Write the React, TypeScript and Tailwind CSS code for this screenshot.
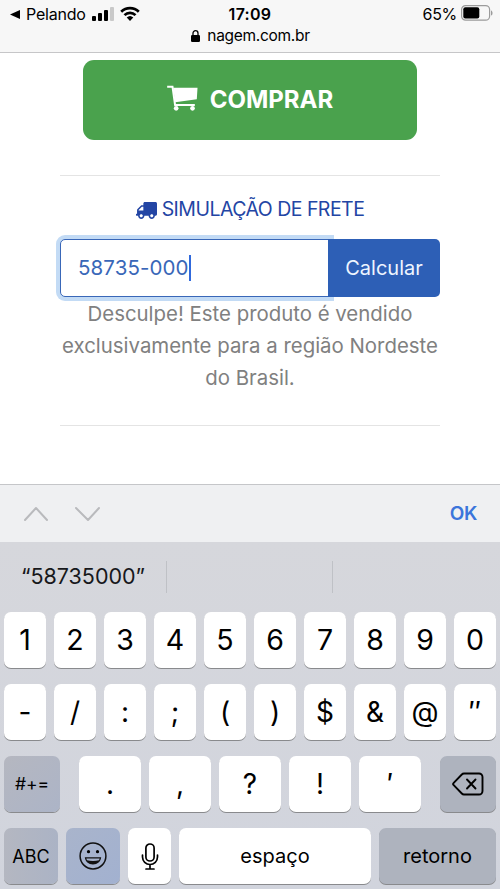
import { FaTruck } from "react-icons/fa";
import clsx from "clsx";
import type { ReactNode } from "react";

const numberRow = ["1", "2", "3", "4", "5", "6", "7", "8", "9", "0"];
const symbolRow = ["-", "/", ":", ";", "(", ")", "$", "&", "@", "″"];
const punctuationRow = [".", ",", "?", "!", "′"];

function Key({
  children,
  className,
}: {
  children: ReactNode;
  className?: string;
}) {
  return (
    <button
      className={clsx(
        "flex h-14 items-center justify-center rounded-[7px] text-black shadow-[0_1px_0_#898a8d]",
        className,
      )}
    >
      {children}
    </button>
  );
}

function StatusBar() {
  return (
    <header className="h-[53px] border-b border-[#c6c6c8] bg-[#f7f7f7] text-black">
      <div className="grid h-7 grid-cols-3 items-center">
        <div className="flex items-center pl-[10px]">
          <svg viewBox="0 0 10 9" className="h-[9px] w-[10px]">
            <path d="M0 4.5 10 0v9z" />
          </svg>
          <span className="ml-[6px] text-[16px] tracking-[-0.2px]">
            Pelando
          </span>
          <svg viewBox="0 0 22 14" className="ml-[6px] h-[14px] w-[22px]">
            <rect x="0" y="9" width="4" height="5" rx="1" />
            <rect x="6" y="6" width="4" height="8" rx="1" />
            <rect x="12" y="3" width="4" height="11" rx="1" />
            <rect x="18" y="0" width="4" height="14" rx="1" fill="#c9c9c9" />
          </svg>
          <svg viewBox="0 0 20 15" className="ml-[6px] -mt-[2px] h-[15px] w-5">
            <g fill="none" stroke="#000" strokeWidth="2.7">
              <path d="M1.2 5.7a12.6 12.6 0 0 1 17.6 0" />
              <path d="M4.5 9.1a7.9 7.9 0 0 1 11 0" />
            </g>
            <path d="M10 15 6.7 11.6a4.9 4.9 0 0 1 6.6 0z" />
          </svg>
        </div>
        <span className="text-center text-[16px] font-semibold tracking-[0.3px]">
          17:09
        </span>
        <div className="flex items-center justify-end pr-[7px]">
          <span className="text-[16px] tracking-[-0.3px]">65%</span>
          <svg viewBox="0 0 32 16" className="ml-1 -mt-[2px] h-4 w-8">
            <rect
              x="0.6"
              y="0.6"
              width="28"
              height="14.6"
              rx="4"
              fill="none"
              stroke="#9b9b9b"
              strokeWidth="1.2"
            />
            <rect x="2.3" y="2.3" width="16" height="11.2" rx="2" />
            <path d="M30 5.4c2 .6 2 4.6 0 5.2z" fill="#9b9b9b" />
          </svg>
        </div>
      </div>
      <div className="flex h-4 items-center justify-center gap-[7px] pl-px">
        <svg viewBox="0 0 9 12" className="h-3 w-[9px]">
          <rect x="0" y="5" width="9" height="7" rx="1.2" />
          <path
            d="M2 6V3.2a2.500 2.500 0 0 1 5 0V6"
            fill="none"
            stroke="#000"
            strokeWidth="1.3"
          />
        </svg>
        <span className="text-[15.5px] leading-4 tracking-[-0.3px]">
          nagem.com.br
        </span>
      </div>
    </header>
  );
}

function CartIcon() {
  return (
    <svg viewBox="0 0 92 78" className="-mt-1 h-[26px] w-[31px]">
      <g fill="none" stroke="#fff" strokeWidth="6">
        <path d="M0 5h16l8 57" />
        <path d="M22 60h61" />
      </g>
      <path d="M18 8h73l-2 35-65 9z" fill="#fff" />
      <circle cx="27" cy="70" r="7" fill="#fff" />
      <circle cx="76" cy="70" r="7" fill="#fff" />
    </svg>
  );
}

function ShippingForm() {
  return (
    <section className="mx-[60px] mt-[35px] h-[251px] border-y border-[#e4e4e4]">
      <h2 className="mt-[22px] flex h-6 items-center justify-center gap-[5px] text-[#2345a4]">
        <FaTruck className="h-[17px] w-[21px] -scale-x-100" />
        <span className="text-[19.5px] tracking-[-0.52px] whitespace-nowrap">
          SIMULAÇÃO DE FRETE
        </span>
      </h2>
      <div className="mt-[17px] flex h-[58px]">
        <div className="flex w-[270px] items-center rounded-l-[5px] border border-[#3967b8] bg-white pl-[17px] text-[20.5px] text-[#3967b8] shadow-[0_0_0_4px_#c3dbf5]">
          <span className="tracking-[0.1px]">58735-000</span>
          <span className="h-[26px] w-[2px] bg-[#3069dc]" />
        </div>
        <button className="relative w-[112px] -ml-[2px] rounded-r-[5px] bg-[#2d5fb6] text-[20px] text-[#eef5ff]">
          Calcular
        </button>
      </div>
      <p className="mt-px text-center text-[20.4px] leading-8 whitespace-nowrap text-[#808080]">
        Desculpe! Este produto é vendido
        <br />
        exclusivamente para a região Nordeste
        <br />
        do Brasil.
      </p>
    </section>
  );
}

function Keyboard() {
  return (
    <div className="h-[347px] bg-linear-to-b from-[#d6d7dc] to-[#d1d4dd]">
      <div className="flex h-[70px] items-center">
        <span className="flex h-8 w-[167px] items-center justify-center border-r border-[#bfc1c6] pb-[2px] text-[21.5px] text-[#17181b]">
          “58735000”
        </span>
        <span className="h-8 w-[166px] border-r border-[#bfc1c6]" />
      </div>
      <div className="flex flex-col gap-4 px-1">
        <div className="grid grid-cols-10 gap-2">
          {numberRow.map((key) => (
            <Key key={key} className="bg-white text-[28.5px]">
              {key}
            </Key>
          ))}
        </div>
        <div className="grid grid-cols-10 gap-2">
          {symbolRow.map((key) => (
            <Key key={key} className="bg-white text-[28px]">
              {key}
            </Key>
          ))}
        </div>
        <div className="flex justify-between">
          <Key className="w-14 bg-linear-to-br from-[#b5b7c0] to-[#acb4c7] text-[17.5px]">
            #+=
          </Key>
          <div className="flex gap-2">
            {punctuationRow.map((key) => (
              <Key key={key} className="w-[62px] bg-white text-[28px]">
                {key}
              </Key>
            ))}
          </div>
          <Key className="w-14 bg-[#aeb3be]">
            <svg
              viewBox="0 0 32 24"
              className="h-6 w-8"
              fill="none"
              stroke="#000"
              strokeWidth="1.9"
              strokeLinecap="round"
              strokeLinejoin="round"
            >
              <path d="M12 1.5h15a3.5 3.5 0 0 1 3.5 3.5v14a3.5 3.5 0 0 1-3.5 3.5H12a3 3 0 0 1-2.2-1L1.7 13.2a1.7 1.7 0 0 1 0-2.4l8.1-8.3a3 3 0 0 1 2.2-1z" />
              <path d="m15 7.5 8.5 9M23.5 7.5l-8.5 9" />
            </svg>
          </Key>
        </div>
        <div className="flex gap-2">
          <Key className="w-[54px] bg-linear-to-r from-[#b4b7c1] to-[#abb3c5] text-[18px]">
            ABC
          </Key>
          <Key className="w-[54px] bg-linear-to-br from-[#a9b4cb] to-[#a2b1d0]">
            <svg viewBox="0 0 28 28" className="h-7 w-7">
              <circle
                cx="14"
                cy="14"
                r="12.9"
                fill="none"
                stroke="#111"
                strokeWidth="1.5"
              />
              <circle cx="9.5" cy="9.7" r="1.6" />
              <circle cx="18.5" cy="9.7" r="1.6" />
              <path
                d="M5.8 15.3h16.400c-.5 4.200-3.700 7.200-8.200 7.200s-7.700-3-8.200-7.200z"
                fill="#111"
              />
              <path d="M7.300 16.500h13.400l-.7 1.700c-3.500 1-8.500 1-12 0z" fill="#a5b2cc" />
            </svg>
          </Key>
          <Key className="w-[43px] bg-white">
            <svg
              viewBox="0 0 18 27"
              className="h-[27px] w-[18px]"
              fill="none"
              stroke="#000"
              strokeWidth="1.7"
              strokeLinecap="round"
            >
              <rect x="4.9" y="1" width="8.2" height="17" rx="4.1" />
              <path d="M1.5 12v2a7.5 7.5 0 0 0 15 0v-2M9 21.5V26M5 26h8" />
            </svg>
          </Key>
          <Key className="w-48 bg-white text-[20px]">espaço</Key>
          <Key className="w-[117px] bg-[#aeb3be] text-[20px]">retorno</Key>
        </div>
      </div>
    </div>
  );
}

export default function App() {
  return (
    <div className="h-[889px] w-[500px] overflow-hidden bg-white font-['Inter','Liberation_Sans',sans-serif]">
      <StatusBar />
      <main className="h-[431px] pt-[7px]">
        <button className="mx-auto flex h-20 w-[334px] items-center justify-center gap-3 rounded-[11px] bg-[#4aa24d] text-[24px] font-bold text-white">
          <CartIcon />
          <span>COMPRAR</span>
        </button>
        <ShippingForm />
      </main>
      <div className="flex h-[58px] items-center border-t border-[#c5c6c9] bg-[#eff0f2] pr-[23px] pl-6">
        <svg
          viewBox="0 0 76 16"
          className="h-4 w-[76px]"
          fill="none"
          stroke="#b9babd"
          strokeWidth="2"
          strokeLinecap="round"
          strokeLinejoin="round"
        >
          <path d="M1 14 12 2l11 12M52 2l12 12L75 2" />
        </svg>
        <span className="mt-[2px] ml-auto text-[19px] font-semibold tracking-[-0.4px] text-[#3b75db]">
          OK
        </span>
      </div>
      <Keyboard />
    </div>
  );
}
